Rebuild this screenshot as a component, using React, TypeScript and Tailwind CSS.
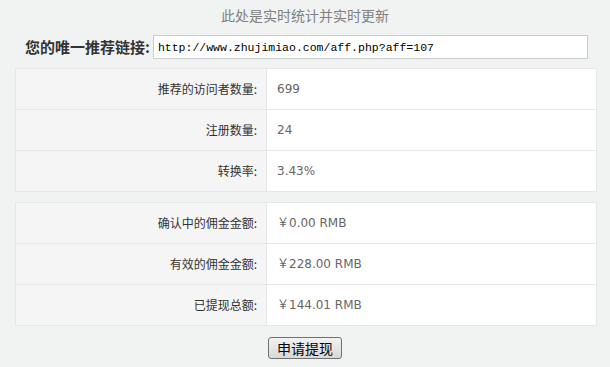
const STATS = [
  { label: '推荐的访问者数量:', value: '699' },
  { label: '注册数量:', value: '24' },
  { label: '转换率:', value: '3.43%' },
]

const MONEY = [
  { label: '确认中的佣金金额:', value: '￥0.00 RMB' },
  { label: '有效的佣金金额:', value: '￥228.00 RMB' },
  { label: '已提现总额:', value: '￥144.01 RMB' },
]

const CJK = 'font-["Noto_Sans_CJK_SC",sans-serif]'

function StatTable({ rows, className = '' }: { rows: { label: string; value: string }[]; className?: string }) {
  return (
    <div className={`mx-[15px] w-[582px] border border-[#e6e8e8] bg-white ${className}`}>
      {rows.map((r, i) => (
        <div key={r.label} className={`flex ${i < rows.length - 1 ? 'h-[41px] border-b border-[#e6e8e8]' : 'h-[40px]'}`}>
          <div className={`w-[251px] shrink-0 bg-[#f5f5f5] border-r border-[#e6e8e8] flex items-center justify-end pr-[9px] text-[12px] text-[#333] ${CJK}`}>
            {r.label}
          </div>
          <div className='flex-1 flex items-center pl-[10px] text-[12px] text-[#666] font-["DejaVu_Sans","Noto_Sans_CJK_SC",sans-serif]'>
            {r.value}
          </div>
        </div>
      ))}
    </div>
  )
}

export default function App() {
  return (
    <div className="bg-[#f1f3f3] w-[610px] h-[367px] overflow-hidden">
      <div className={`pt-[5px] leading-[20px] text-center text-[14px] text-[#808080] ${CJK}`}>
        此处是实时统计并实时更新
      </div>

      <div className="flex items-center mt-[10px] pl-[25px] h-[24px]">
        <span className={`text-[15px] font-bold text-[#333] ${CJK}`}>您的唯一推荐链接:</span>
        <input
          readOnly
          value="http://www.zhujimiao.com/aff.php?aff=107"
          className='ml-[3px] w-[435px] h-[24px] bg-white border border-[#c8cccc] px-[4px] text-[11.5px] text-black font-["Liberation_Mono",monospace] outline-none'
        />
      </div>

      <StatTable rows={STATS} className="mt-[9px]" />
      <StatTable rows={MONEY} className="mt-[10px]" />

      <div className="flex justify-center mt-[11px]">
        <button className={`w-[74px] h-[22px] rounded-[3px] border border-[#707070] bg-gradient-to-b from-[#f2f2f2] to-[#d8d8d8] text-[14px] leading-[20px] text-black ${CJK}`}>
          申请提现
        </button>
      </div>
    </div>
  )
}
